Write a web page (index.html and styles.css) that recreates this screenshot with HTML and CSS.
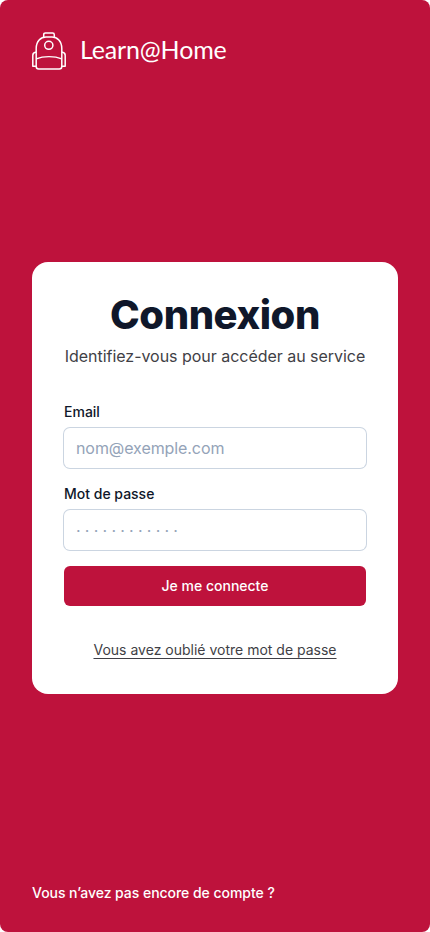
FILE: index.html
```html
<!DOCTYPE html>
<html lang="fr">
<head>
<meta charset="utf-8">
<meta name="viewport" content="width=device-width, initial-scale=1">
<title>Learn@Home</title>
<link rel="stylesheet" href="styles.css">
</head>
<body>
<div class="page">
  <header class="brand">
    <svg class="brand-icon" width="34" height="38" viewBox="0 0 34 39" preserveAspectRatio="none" fill="none" stroke="currentColor" stroke-width="1.5" stroke-linejoin="round">
      <path d="M11.7 5.2V2.7Q11.7 1 13.4 1H20.6Q22.3 1 22.3 2.7V5.2"/>
      <path d="M4.2 35.5V17C4.2 9.5 8.8 5.2 14 5.2H20C25.2 5.2 29.8 9.5 29.8 17V35.5Q29.8 38 27.3 38H6.7Q4.2 38 4.2 35.5Z"/>
      <path d="M4.2 27.6C11.5 24.5 22.5 24.5 29.8 27.6"/>
      <path d="M4.2 20.7H3.5Q.8 21 .8 24V35.1H4.2M29.8 20.7H30.5Q33.2 21 33.2 24V35.1H29.8"/>
      <circle cx="16.8" cy="13.7" r="4.1"/>
    </svg>
    <span class="brand-name">Learn@Home</span>
  </header>
  <main class="main">
    <form class="card">
      <h1 class="title">Connexion</h1>
      <p class="subtitle">Identifiez-vous pour accéder au service</p>
      <div class="fields">
        <div class="field">
          <label class="label" for="email">Email</label>
          <input class="input" id="email" type="email" placeholder="nom@exemple.com">
        </div>
        <div class="field">
          <label class="label" for="password">Mot de passe</label>
          <input class="input input-password" id="password" type="password" placeholder="· · · · · · · · · · · ·">
        </div>
        <button class="submit" type="button">Je me connecte</button>
      </div>
      <a class="forgot" href="#">Vous avez oublié votre mot de passe</a>
    </form>
  </main>
  <footer class="footer">Vous n’avez pas encore de compte ?</footer>
</div>
</body>
</html>
```
FILE: styles.css
```css
* { box-sizing: border-box; }
body { margin: 0; background: #fff; font-family: Inter, sans-serif; }
.page {
  display: flex;
  flex-direction: column;
  height: 932px;
  padding: 32px 32px 29px;
  border-radius: 8px;
  background: #be123c;
  color: #fff;
}
.brand { display: flex; gap: 14px; height: 39px; }
.brand-icon { flex: none; }
.brand-name {
  font-family: Lato, sans-serif;
  font-size: 25px;
  line-height: 35px;
  letter-spacing: -0.15px;
}
.main { flex: 1; padding-top: 191px; }
.card {
  display: flex;
  flex-direction: column;
  height: 432px;
  padding: 32px;
  border-radius: 16px;
  background: #fff;
  color: #0f172a;
}
.title {
  margin: 0;
  font-size: 40px;
  line-height: 42px;
  font-weight: 800;
  letter-spacing: -0.45px;
  text-align: center;
}
.subtitle {
  margin: 6px -8px 0;
  color: #3f3f46;
  font-size: 16px;
  line-height: 28px;
  letter-spacing: -0.03px;
  text-align: center;
}
.fields { display: flex; flex-direction: column; gap: 16px; margin-top: 32px; }
.field { display: flex; flex-direction: column; gap: 6px; }
.label { font-size: 14px; line-height: 20px; font-weight: 500; }
.input {
  width: 100%;
  height: 40px;
  padding: 0 12px;
  border: 0;
  border-radius: 6px;
  box-shadow: 0 0 0 1px #cbd5e1;
  background: #fff;
  color: #0f172a;
  font: 400 16px/24px Inter, sans-serif;
  letter-spacing: -0.08px;
}
.input::placeholder { color: #94a3b8; opacity: 1; }
.input-password { padding-top: 2px; letter-spacing: -0.13px; }
.submit {
  height: 40px;
  border: 0;
  border-radius: 6px;
  background: #be123c;
  color: #fff;
  font: 500 14px/24px Inter, sans-serif;
}
.forgot {
  align-self: center;
  margin-top: 32px;
  color: #3f3f46;
  font-size: 14px;
  line-height: 24px;
  text-underline-offset: 3px;
}
.footer { font-size: 14px; line-height: 20px; font-weight: 500; letter-spacing: -0.04px; }
```
